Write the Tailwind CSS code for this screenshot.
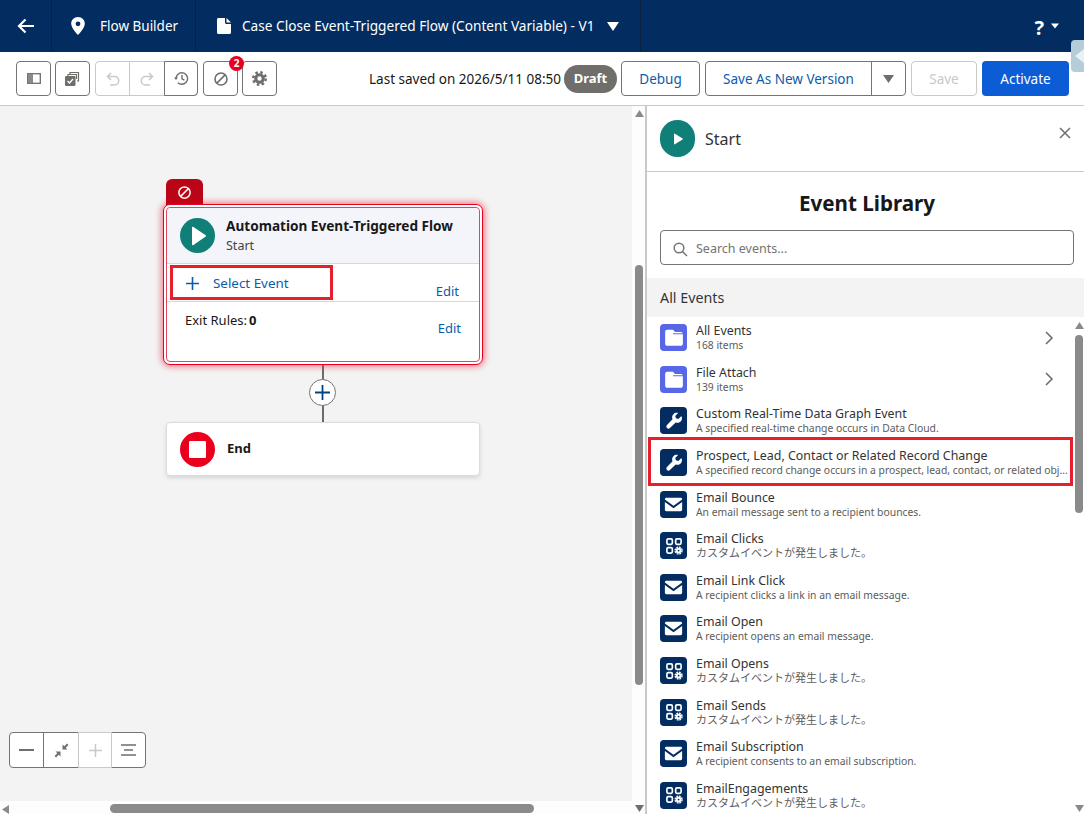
<!DOCTYPE html>
<html lang="en">
<head>
    <meta charset="UTF-8">
    <meta name="viewport" content="width=device-width, initial-scale=1.0">
    <title>Flow Builder</title>
    <script src="https://cdn.jsdelivr.net/npm/@tailwindcss/browser@4"></script>
</head>
<body class="w-[1084px] h-[814px] overflow-hidden bg-white text-[#181818] font-['Noto_Sans','Noto_Sans_CJK_JP',sans-serif]">
    <svg class="hidden">
        <symbol id="wrench" viewBox="0 0 24 24"><path fill="#fff" d="M20.600 6.200l-3.400 3.400-2.900-.8-.8-2.900 3.400-3.400c-1.900-.6-4.100-.2-5.600 1.300-1.600 1.600-2 4-1.100 6L3.600 16.900c-1 1-1 2.500 0 3.500s2.500 1 3.500 0l6.900-6.700c2 .9 4.400.5 6-1.100 1.500-1.500 1.900-3.700 1.300-5.600z"/></symbol>
        <symbol id="mail" viewBox="0 0 24 24"><path fill="#fff" d="M3 6.500C3 5.700 3.700 5 4.500 5h15c.8 0 1.500.7 1.500 1.500v.2l-9 6.600-9-6.600z"/><path fill="#fff" d="M3 9.300l9 6.500 9-6.500v8.200c0 .8-.7 1.500-1.500 1.500h-15C3.700 19 3 18.300 3 17.500z"/></symbol>
        <symbol id="apps" viewBox="0 0 24 24"><g fill="none" stroke="#fff" stroke-width="2"><rect x="3.500" y="3.500" width="6.500" height="6.500" rx="1.500"/><rect x="14" y="3.500" width="6.500" height="6.500" rx="1.500"/><rect x="3.500" y="14" width="6.500" height="6.500" rx="1.500"/></g><circle cx="17.500" cy="17.500" r="2.300" fill="none" stroke="#fff" stroke-width="2.400"/><circle cx="17.500" cy="17.500" r="4.200" fill="none" stroke="#fff" stroke-width="1.600" stroke-dasharray="2.200 1.100"/></symbol>
        <symbol id="folder" viewBox="0 0 24 24"><path fill="#fff" fill-rule="evenodd" d="M6 4.500h5.500l2 2.300H19c1.100 0 2 .9 2 2v9.200c0 1.100-.9 2-2 2H6c-1.100 0-2-.9-2-2v-11.500c0-1.100.9-2 2-2zM11.500 8v.8H21V8z"/></symbol>
        <symbol id="ban" viewBox="0 0 24 24"><g fill="none" stroke="currentColor" stroke-width="2.400"><circle cx="12" cy="12" r="9"/><path d="M5.800 18.200L18.200 5.800"/></g></symbol>
    </svg>

    <!-- top bar -->
    <header class="h-[52px] bg-[#032d60] flex items-center text-white text-[13.500px]">
        <div class="w-[52px] h-full flex items-center justify-center border-r border-[#0b1f3f]">
            <svg width="20" height="20" viewBox="0 0 20 20" fill="none" stroke="#fff" stroke-width="2.200"><path d="M18 10H3M9.500 3.500L3 10l6.500 6.500"/></svg>
        </div>
        <div class="w-[144px] h-full flex items-center border-r border-[#0b1f3f] pl-[18px]">
            <svg width="16" height="20" viewBox="0 0 16 20"><path fill="#fff" fill-rule="evenodd" d="M8 1C4 1 1.200 4 1.200 7.600 1.200 12 6 17 8 19c2-2 6.800-7 6.800-11.400C14.800 4 12 1 8 1zm0 4.400a2.400 2.400 0 110 4.800 2.400 2.400 0 010-4.800z"/></svg>
            <span class="ml-[14px]">Flow Builder</span>
        </div>
        <div class="w-[445px] h-full flex items-center border-r border-[#0b1f3f] pl-[20px]">
            <svg width="16" height="18" viewBox="0 0 16 18"><path fill="#fff" d="M2.500 1H9v4.500c0 .8.700 1.500 1.500 1.500H15v8.500c0 .8-.7 1.500-1.500 1.500h-11C1.700 17 1 16.300 1 15.500v-13C1 1.700 1.700 1 2.500 1zM10.500 1L15 5.500h-4.500z"/></svg>
            <span class="ml-[10px] whitespace-nowrap text-[13.650px]">Case Close Event-Triggered Flow (Content Variable) - V1</span>
            <svg class="ml-[13px]" width="12" height="9" viewBox="0 0 12 9"><path fill="#fff" d="M0 0h12L6 9z"/></svg>
        </div>
        <div class="flex-1 h-full flex items-center justify-end pr-[25px]">
            <span class="text-[20px] font-bold mt-[3px]">?</span>
            <svg class="ml-[7px]" width="8" height="6" viewBox="0 0 8 6"><path fill="#fff" d="M0 .5h8L4 5.500z"/></svg>
        </div>
    </header>

    <!-- toolbar -->
    <div class="relative h-[54px] flex items-center pl-4 pr-[15px] border-b border-[#c9c9c9] text-[13.500px]">
        <button class="w-[35px] h-[35px] rounded border border-[#747474] flex items-center justify-center">
            <svg width="14" height="11" viewBox="0 0 14 11"><rect x=".7" y=".7" width="12.600" height="9.600" fill="none" stroke="#706e6b" stroke-width="1.300"/><rect x="1" y="1" width="5" height="9" fill="#8a8a8a"/></svg>
        </button>
        <button class="ml-[4px] w-[35px] h-[35px] rounded border border-[#747474] flex items-center justify-center">
            <svg width="15" height="15" viewBox="0 0 15 15"><path fill="none" stroke="#706e6b" stroke-width="1.200" d="M5 3V1.500h8.500V10H12M3 5V3.500h8.500V8"/><rect x="0" y="5" width="10.500" height="10" rx="1.200" fill="#706e6b"/><path fill="none" stroke="#fff" stroke-width="1.400" d="M2.500 10l2 2 3.500-4"/></svg>
        </button>
        <div class="ml-[5px] flex h-[35px] rounded border border-[#c9c9c9]">
            <div class="w-[34px] flex items-center justify-center border-r border-[#c9c9c9]">
                <svg width="14" height="14" viewBox="0 0 14 14" fill="none" stroke="#c9c9c9" stroke-width="1.500"><path d="M5 1L1.500 4.500 5 8M1.500 4.500H8.500a4 4 0 010 8.500H4"/></svg>
            </div>
            <div class="w-[34px] flex items-center justify-center">
                <svg width="14" height="14" viewBox="0 0 14 14" fill="none" stroke="#c9c9c9" stroke-width="1.500"><path d="M9 1l3.500 3.500L9 8M12.500 4.500H5.500a4 4 0 000 8.500H10"/></svg>
            </div>
            <div class="w-[34px] -my-px -mr-px flex items-center justify-center border border-[#747474] rounded-r">
                <svg width="15" height="15" viewBox="0 0 15 15" fill="none" stroke="#706e6b" stroke-width="1.400"><path d="M2 7.500a5.800 5.800 0 115.800 5.800 5.800 5.800 0 01-4-1.600M8 4v3.800l2.400 1.400"/><path fill="#706e6b" stroke="none" d="M0 6.500h4L2 9z"/></svg>
            </div>
        </div>
        <div class="relative ml-[5px] w-[35px] h-[35px] rounded border border-[#747474] flex items-center justify-center text-[#706e6b]">
            <svg width="16" height="16"><use href="#ban"/></svg>
            <span class="absolute -top-[6px] right-[-7px] w-[15px] h-[15px] rounded-full bg-[#ea001e] text-white text-[10px] font-bold leading-[15px] text-center">2</span>
        </div>
        <button class="ml-[4px] w-[35px] h-[35px] rounded border border-[#747474] flex items-center justify-center">
            <svg width="15" height="15" viewBox="0 0 24 24"><circle cx="12" cy="12" r="6" fill="none" stroke="#706e6b" stroke-width="5"/><circle cx="12" cy="12" r="10" fill="none" stroke="#706e6b" stroke-width="4" stroke-dasharray="4 3.850"/></svg>
        </button>
        <span class="ml-auto pt-px whitespace-nowrap">Last saved on 2026/5/11 08:50</span>
        <span class="ml-[3px] w-[53px] h-[28px] rounded-full bg-[#706e6b] text-white text-[13px] font-bold flex items-center justify-center">Draft</span>
        <button class="ml-[4px] w-[79px] h-[35px] pt-px rounded border border-[#747474] text-[#0b5cab]">Debug</button>
        <div class="ml-[5px] flex h-[35px] w-[201px] rounded border border-[#747474]">
            <span class="w-[166px] pt-px flex items-center justify-center border-r border-[#747474] text-[#0b5cab] whitespace-nowrap">Save As New Version</span>
            <span class="flex-1 flex items-center justify-center">
                <svg width="11" height="8" viewBox="0 0 11 8"><path fill="#706e6b" d="M0 0h11L5.500 8z"/></svg>
            </span>
        </div>
        <button class="ml-[5px] w-[66px] h-[35px] pt-px rounded border border-[#c9c9c9] text-[#c9c9c9]">Save</button>
        <button class="ml-[5px] w-[87px] h-[35px] pt-px rounded bg-[#0b5cd5] text-white">Activate</button>
        <div class="absolute right-0 top-[-12px] w-[13px] h-[32px] rounded-l bg-[#b5cdd8] flex items-center justify-end">
            <svg width="10" height="14" viewBox="0 0 10 14"><path fill="#e8f1f5" d="M10 0v14L1 7z"/></svg>
        </div>
    </div>

    <div class="flex h-[708px]">
        <!-- canvas -->
        <main class="relative w-[647px] bg-[#fdfdfd] border-r-[2px] border-[#c9c9c9] shrink-0 overflow-hidden">
            <div class="absolute left-0 top-0 w-[632px] h-[695px] bg-[#f3f3f3]"></div>

            <!-- start node -->
            <div class="absolute left-[166px] top-[73px] w-[37px] h-[30px] rounded-t-md bg-[#ba0517] flex justify-center pt-[6px] text-white">
                <svg width="15" height="15"><use href="#ban"/></svg>
            </div>
            <div class="absolute left-[163px] top-[98px] w-[320px] h-[161px] rounded-[7px] border-[1.500px] border-[#ea001e] bg-white p-[2px] shadow-[0_0_6px_2px_rgba(234,0,30,0.45)]">
                <div class="h-full rounded-[4px] border border-[#e3465a] flex flex-col">
                    <div class="h-[56px] bg-[#f3f5fa] rounded-t-[4px] border-b border-[#d8d8d8] flex items-center pl-[13px]">
                        <div class="w-[35px] h-[35px] rounded-full bg-[#0f7f77] flex items-center justify-center">
                            <svg width="18" height="20" viewBox="0 0 18 20"><path fill="#fff" d="M3 1.500c0-.6.600-1 1.100-.7l12.600 8.500c.5.300.5 1 0 1.300L4.100 19.200c-.5.300-1.100-.1-1.100-.7z"/></svg>
                        </div>
                        <div class="ml-[11px] pt-px">
                            <div class="text-[13.600px] font-bold leading-[20px]">Automation Event-Triggered Flow</div>
                            <div class="text-[12.500px] leading-[20px] text-[#444]">Start</div>
                        </div>
                    </div>
                    <div class="h-[38px] border-b border-[#d8d8d8] flex items-center pl-[18px] pt-[2px] text-[#0b5cab] text-[13px] relative">
                        <svg width="15" height="15" viewBox="0 0 15 15"><path fill="none" stroke="#0b5cab" stroke-width="1.600" d="M7.500 1v13M1 7.500h13"/></svg>
                        <span class="ml-[13px] text-[13.400px]">Select Event</span>
                        <span class="absolute right-[20px] top-[18px]">Edit</span>
                    </div>
                    <div class="relative flex-1 pl-[18px] pt-[9px] text-[13px]">
                        Exit Rules:<b class="ml-[2px] text-[13px]">0</b>
                        <span class="absolute right-[18px] top-[17px] text-[#0b5cab] text-[13px]">Edit</span>
                    </div>
                </div>
            </div>
            <div class="absolute left-[170px] top-[159px] w-[163px] h-[35px] border-[3px] border-[#e3202c]"></div>

            <!-- connector -->
            <div class="absolute left-[322px] top-[259px] w-[2px] h-[57px] bg-[#6b6b6b]"></div>
            <div class="absolute left-[309px] top-[273px] w-[27px] h-[27px] rounded-full border-[1.500px] border-[#747474] bg-white flex items-center justify-center">
                <svg width="17" height="17" viewBox="0 0 17 17"><path fill="none" stroke="#014486" stroke-width="1.800" d="M8.500 1v15M1 8.500h15"/></svg>
            </div>

            <!-- end node -->
            <div class="absolute left-[166px] top-[316px] w-[314px] h-[54px] rounded bg-white border border-[#dcdcdc] shadow-[0_2px_4px_rgba(0,0,0,0.12)] flex items-center pl-[13px]">
                <div class="w-[35px] h-[35px] rounded-full bg-[#ea001e] flex items-center justify-center">
                    <div class="w-[17px] h-[17px] bg-white rounded-[1px]"></div>
                </div>
                <span class="ml-[12px] text-[13px] font-bold">End</span>
            </div>

            <!-- zoom controls -->
            <div class="absolute left-[9px] top-[626px] flex w-[137px] h-[36px] rounded border border-[#747474] bg-white">
                <div class="w-[34px] flex items-center justify-center border-r border-[#747474]">
                    <svg width="15" height="2" viewBox="0 0 15 2"><path stroke="#706e6b" stroke-width="2" d="M0 1h15"/></svg>
                </div>
                <div class="w-[34px] flex items-center justify-center">
                    <svg width="15" height="15" viewBox="0 0 15 15"><path fill="#706e6b" d="M8.500 6.500V1.500l1.800 1.800L13 .6l1.400 1.400-2.700 2.700 1.800 1.800zM6.500 8.500v5l-1.800-1.800L2 14.400.6 13l2.700-2.700L1.500 8.500z"/></svg>
                </div>
                <div class="w-[34px] flex items-center justify-center border-x border-[#c9c9c9] -my-px border-y">
                    <svg width="15" height="15" viewBox="0 0 15 15"><path stroke="#c9c9c9" stroke-width="1.500" d="M7.500 1v13M1 7.500h13"/></svg>
                </div>
                <div class="flex-1 flex items-center justify-center">
                    <svg width="15" height="12" viewBox="0 0 15 12"><path stroke="#706e6b" stroke-width="1.600" d="M0 1h15M3 6h9M0 11h15"/></svg>
                </div>
            </div>

            <!-- vertical scrollbar -->
            <svg class="absolute left-[635px] top-[4px]" width="9" height="7" viewBox="0 0 9 7"><path fill="#8a8a8a" d="M4.500 0L9 7H0z"/></svg>
            <div class="absolute left-[635px] top-[159px] w-[8px] h-[420px] rounded-full bg-[#8a8a8a]"></div>
            <svg class="absolute left-[635px] top-[699px]" width="9" height="7" viewBox="0 0 9 7"><path fill="#6f6f6f" d="M4.500 7L9 0H0z"/></svg>
            <!-- horizontal scrollbar -->
            <svg class="absolute left-[2px] top-[699px]" width="7" height="9" viewBox="0 0 7 9"><path fill="#8a8a8a" d="M0 4.500L7 0v9z"/></svg>
            <div class="absolute left-[110px] top-[698px] w-[424px] h-[9px] rounded-full bg-[#8a8a8a]"></div>
        </main>

        <!-- event panel -->
        <aside class="relative flex-1 flex flex-col min-w-0">
            <div class="h-[66px] shrink-0 border-b border-[#c9c9c9] flex items-center pl-[13px]">
                <div class="w-[35px] h-[37px] rounded-full bg-[#0f7f77] flex items-center justify-center">
                    <svg width="10" height="12" viewBox="0 0 10 12"><path fill="#fff" d="M1 1.200c0-.5.500-.8.900-.5l7.700 4.800c.4.200.4.800 0 1L1.900 11.300c-.4.300-.9 0-.9-.5z"/></svg>
                </div>
                <span class="ml-[10px] text-[16px] text-[#333]">Start</span>
                <svg class="ml-auto mr-[13px] -mt-[12px]" width="12" height="12" viewBox="0 0 12 12"><path stroke="#706e6b" stroke-width="1.500" d="M1 1l10 10M11 1L1 11"/></svg>
            </div>
            <h2 class="ml-[13px] mr-[10px] text-center text-[20.600px] font-bold leading-[28px] mt-[17px]">Event Library</h2>
            <div class="ml-[13px] mr-[10px] mt-[13px] h-[35px] rounded border border-[#747474] flex items-center pl-[12px] pt-[3px] text-[12.500px] text-[#747474]">
                <svg width="15" height="15" viewBox="0 0 15 15" fill="none" stroke="#747474" stroke-width="1.500"><circle cx="6" cy="6" r="4.800"/><path d="M9.500 9.500l4.500 4.500"/></svg>
                <span class="ml-[8px]">Search events...</span>
            </div>
            <div class="mt-[13px] h-[39px] shrink-0 bg-[#f3f3f3] flex items-center pl-[13px] pt-px text-[14.300px] text-[#333]">All Events</div>

            <div class="relative flex-1 overflow-hidden">
                <!-- rows -->
                <div class="flex flex-col">
                    <div class="h-[41.600px] flex items-center pl-[13px]">
                        <span class="w-[27px] h-[27px] rounded bg-[#5867e8] flex items-center justify-center"><svg width="25" height="25"><use href="#folder"/></svg></span>
                        <div class="ml-[9px] flex-1 min-w-0"><div class="h-[15px] leading-[15px] text-[12.400px] text-[#333]">All Events</div><div class="text-[10.350px] leading-[14px] text-[#5c5c5c]">168 items</div></div>
                        <svg class="mr-[30px]" width="10" height="14" viewBox="0 0 10 14"><path fill="none" stroke="#706e6b" stroke-width="1.600" d="M2 1l6 6-6 6"/></svg>
                    </div>
                    <div class="h-[41.600px] flex items-center pl-[13px]">
                        <span class="w-[27px] h-[27px] rounded bg-[#5867e8] flex items-center justify-center"><svg width="25" height="25"><use href="#folder"/></svg></span>
                        <div class="ml-[9px] flex-1 min-w-0"><div class="h-[15px] leading-[15px] text-[12.400px] text-[#333]">File Attach</div><div class="text-[10.350px] leading-[14px] text-[#5c5c5c]">139 items</div></div>
                        <svg class="mr-[30px]" width="10" height="14" viewBox="0 0 10 14"><path fill="none" stroke="#706e6b" stroke-width="1.600" d="M2 1l6 6-6 6"/></svg>
                    </div>
                    <div class="h-[41.600px] flex items-center pl-[13px]">
                        <span class="w-[27px] h-[27px] rounded bg-[#032d60] flex items-center justify-center"><svg width="20" height="20"><use href="#wrench"/></svg></span>
                        <div class="ml-[9px] flex-1 min-w-0"><div class="h-[15px] leading-[15px] text-[12.400px] text-[#333]">Custom Real-Time Data Graph Event</div><div class="text-[10.350px] leading-[14px] text-[#5c5c5c]">A specified real-time change occurs in Data Cloud.</div></div>
                    </div>
                    <div class="h-[41.600px] flex items-center pl-[13px]">
                        <span class="w-[27px] h-[27px] rounded bg-[#032d60] flex items-center justify-center"><svg width="20" height="20"><use href="#wrench"/></svg></span>
                        <div class="ml-[9px] flex-1 min-w-0"><div class="h-[15px] leading-[15px] text-[12.400px] text-[#333]">Prospect, Lead, Contact or Related Record Change</div><div class="text-[10.350px] leading-[14px] text-[#5c5c5c] whitespace-nowrap">A specified record change occurs in a prospect, lead, contact, or related obj...</div></div>
                    </div>
                    <div class="h-[41.600px] flex items-center pl-[13px]">
                        <span class="w-[27px] h-[27px] rounded bg-[#032d60] flex items-center justify-center"><svg width="23" height="23"><use href="#mail"/></svg></span>
                        <div class="ml-[9px] flex-1 min-w-0"><div class="h-[15px] leading-[15px] text-[12.400px] text-[#333]">Email Bounce</div><div class="text-[10.350px] leading-[14px] text-[#5c5c5c]">An email message sent to a recipient bounces.</div></div>
                    </div>
                    <div class="h-[41.600px] flex items-center pl-[13px]">
                        <span class="w-[27px] h-[27px] rounded bg-[#032d60] flex items-center justify-center"><svg width="20" height="20"><use href="#apps"/></svg></span>
                        <div class="ml-[9px] flex-1 min-w-0"><div class="h-[15px] leading-[15px] text-[12.400px] text-[#333]">Email Clicks</div><div class="text-[11px] leading-[14px] text-[#5c5c5c]">カスタムイベントが発生しました。</div></div>
                    </div>
                    <div class="h-[41.600px] flex items-center pl-[13px]">
                        <span class="w-[27px] h-[27px] rounded bg-[#032d60] flex items-center justify-center"><svg width="23" height="23"><use href="#mail"/></svg></span>
                        <div class="ml-[9px] flex-1 min-w-0"><div class="h-[15px] leading-[15px] text-[12.400px] text-[#333]">Email Link Click</div><div class="text-[10.350px] leading-[14px] text-[#5c5c5c]">A recipient clicks a link in an email message.</div></div>
                    </div>
                    <div class="h-[41.600px] flex items-center pl-[13px]">
                        <span class="w-[27px] h-[27px] rounded bg-[#032d60] flex items-center justify-center"><svg width="23" height="23"><use href="#mail"/></svg></span>
                        <div class="ml-[9px] flex-1 min-w-0"><div class="h-[15px] leading-[15px] text-[12.400px] text-[#333]">Email Open</div><div class="text-[10.350px] leading-[14px] text-[#5c5c5c]">A recipient opens an email message.</div></div>
                    </div>
                    <div class="h-[41.600px] flex items-center pl-[13px]">
                        <span class="w-[27px] h-[27px] rounded bg-[#032d60] flex items-center justify-center"><svg width="20" height="20"><use href="#apps"/></svg></span>
                        <div class="ml-[9px] flex-1 min-w-0"><div class="h-[15px] leading-[15px] text-[12.400px] text-[#333]">Email Opens</div><div class="text-[11px] leading-[14px] text-[#5c5c5c]">カスタムイベントが発生しました。</div></div>
                    </div>
                    <div class="h-[41.600px] flex items-center pl-[13px]">
                        <span class="w-[27px] h-[27px] rounded bg-[#032d60] flex items-center justify-center"><svg width="20" height="20"><use href="#apps"/></svg></span>
                        <div class="ml-[9px] flex-1 min-w-0"><div class="h-[15px] leading-[15px] text-[12.400px] text-[#333]">Email Sends</div><div class="text-[11px] leading-[14px] text-[#5c5c5c]">カスタムイベントが発生しました。</div></div>
                    </div>
                    <div class="h-[41.600px] flex items-center pl-[13px]">
                        <span class="w-[27px] h-[27px] rounded bg-[#032d60] flex items-center justify-center"><svg width="23" height="23"><use href="#mail"/></svg></span>
                        <div class="ml-[9px] flex-1 min-w-0"><div class="h-[15px] leading-[15px] text-[12.400px] text-[#333]">Email Subscription</div><div class="text-[10.350px] leading-[14px] text-[#5c5c5c]">A recipient consents to an email subscription.</div></div>
                    </div>
                    <div class="h-[41.600px] flex items-center pl-[13px]">
                        <span class="w-[27px] h-[27px] rounded bg-[#032d60] flex items-center justify-center"><svg width="20" height="20"><use href="#apps"/></svg></span>
                        <div class="ml-[9px] flex-1 min-w-0"><div class="h-[15px] leading-[15px] text-[12.400px] text-[#333]">EmailEngagements</div><div class="text-[11px] leading-[14px] text-[#5c5c5c]">カスタムイベントが発生しました。</div></div>
                    </div>
                </div>
                <!-- highlight over the fourth row -->
                <div class="absolute left-[1px] top-[120px] w-[425px] h-[49px] border-[3px] border-[#e3202c]"></div>
                <!-- list scrollbar -->
                <svg class="absolute left-[428px] top-[5px]" width="9" height="7" viewBox="0 0 9 7"><path fill="#8a8a8a" d="M4.500 0L9 7H0z"/></svg>
                <div class="absolute left-[428px] top-[18px] w-[8px] h-[178px] rounded-full bg-[#8a8a8a]"></div>
                <svg class="absolute left-[428px] top-[488px]" width="9" height="7" viewBox="0 0 9 7"><path fill="#8a8a8a" d="M4.500 7L9 0H0z"/></svg>
            </div>
        </aside>
    </div>
</body>
</html>
